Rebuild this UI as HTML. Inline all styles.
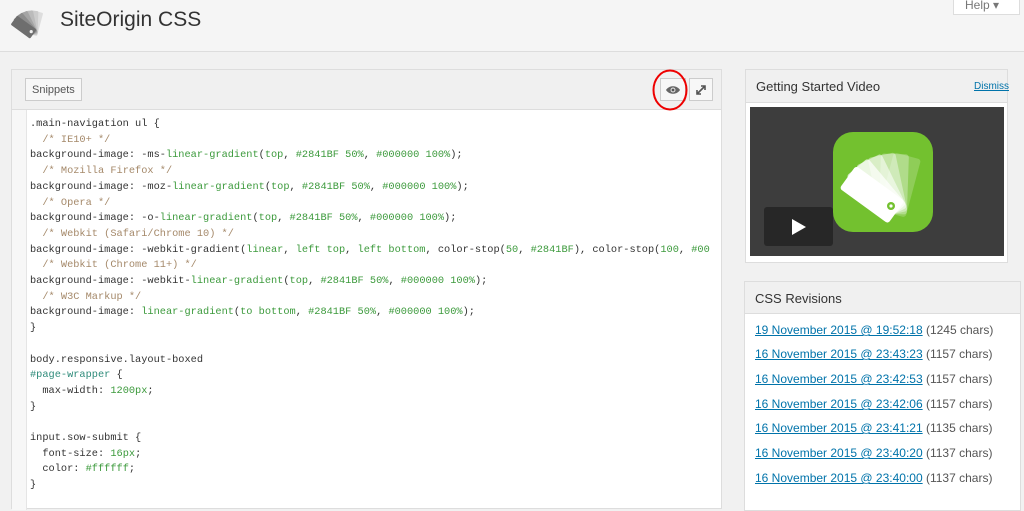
<!DOCTYPE html>
<html><head><style>
*{box-sizing:border-box;margin:0;padding:0}
body{width:1024px;height:499px;overflow:hidden;background:#f1f1f1;font-family:"Liberation Sans",sans-serif;position:relative;color:#444}
.hdr{position:absolute;left:0;top:0;width:1024px;height:52px;background:#f5f5f5;border-bottom:1px solid #ddd}
.help{position:absolute;left:953px;top:-6px;width:67px;height:21px;background:#fff;border:1px solid #ddd;font-size:12px;color:#777;padding:3px 0 0 11px}
.title{position:absolute;left:60px;top:8px;font-size:21px;color:#333}
.panel{position:absolute;background:#fff;border:1px solid #ddd}
.ph{position:absolute;left:0;right:0;top:0;background:#f0f0f0;border-bottom:1px solid #ddd}
.btn{position:absolute;background:#f7f7f7;border:1px solid #ccc}
.code{position:absolute;left:30px;top:117px;font-family:"Liberation Mono","DejaVu Sans Mono",monospace;font-size:10.3px;line-height:15.7px;color:#333;white-space:pre;font-weight:normal}
.c{color:#a5896a}.g{color:#3c9a3c}.t{color:#2e8b7a}
.rev{position:absolute;left:755px;font-size:12px;color:#555;white-space:nowrap}
.rev a{color:#0073aa;text-decoration:underline}
</style></head><body>
<div class="hdr"></div>
<div class="help">Help ▾</div>
<svg style="position:absolute;left:6px;top:2px" width="44" height="40" viewBox="0 0 100 100">
<g transform="translate(60,78)">
<rect x="-14" y="-56" width="28" height="60" rx="3" fill="#ddd" transform="rotate(15)"/>
<rect x="-14" y="-56" width="28" height="60" rx="3" fill="#ccc" transform="rotate(2)"/>
<rect x="-14" y="-56" width="28" height="60" rx="3" fill="#bbb" transform="rotate(-12)"/>
<rect x="-14" y="-56" width="28" height="60" rx="3" fill="#a5a5a5" transform="rotate(-26)"/>
<rect x="-14" y="-56" width="28" height="60" rx="3" fill="#8d8d8d" transform="rotate(-40)"/>
<rect x="-14" y="-56" width="28" height="60" rx="3" fill="#6e6e6e" transform="rotate(-54)"/>
</g><circle cx="58" cy="74" r="4" fill="#eee"/></svg>
<div class="title">SiteOrigin CSS</div>

<div class="panel" style="left:11px;top:69px;width:711px;height:440px">
<div class="ph" style="height:40px"></div>
<div style="position:absolute;left:0;top:40px;width:15px;height:400px;background:#f7f7f7;border-right:1px solid #e5e5e5"></div>
</div>
<div class="btn" style="left:25px;top:78px;width:57px;height:23px;font-size:11px;color:#555;padding:5px 0 0 6px">Snippets</div>
<div class="btn" style="left:660px;top:78px;width:26px;height:23px"></div>
<svg style="position:absolute;left:665px;top:84px" width="16" height="12" viewBox="0 0 16 12"><path d="M1 6C4 1 12 1 15 6C12 11 4 11 1 6Z" fill="#666"/><circle cx="8" cy="6" r="2.5" fill="#ddd"/><circle cx="8" cy="6" r="1.4" fill="#555"/></svg>
<div class="btn" style="left:689px;top:78px;width:24px;height:23px"></div>
<svg style="position:absolute;left:694px;top:83px" width="14" height="14" viewBox="0 0 14 14"><path d="M3 11L11 3M7 3h4v4M3 7v4h4" stroke="#555" stroke-width="1.6" fill="none"/></svg>
<svg style="position:absolute;left:651px;top:69px" width="40" height="44"><ellipse cx="19" cy="21" rx="16.5" ry="19.5" fill="none" stroke="#e00" stroke-width="2"/></svg>

<div class="code">.main-navigation ul {
  <span class="c">/* IE10+ */</span>
background-image: -ms-<span class="g">linear-gradient</span>(<span class="g">top</span>, <span class="g">#2841BF 50%</span>, <span class="g">#000000 100%</span>);
  <span class="c">/* Mozilla Firefox */</span>
background-image: -moz-<span class="g">linear-gradient</span>(<span class="g">top</span>, <span class="g">#2841BF 50%</span>, <span class="g">#000000 100%</span>);
  <span class="c">/* Opera */</span>
background-image: -o-<span class="g">linear-gradient</span>(<span class="g">top</span>, <span class="g">#2841BF 50%</span>, <span class="g">#000000 100%</span>);
  <span class="c">/* Webkit (Safari/Chrome 10) */</span>
background-image: -webkit-gradient(<span class="g">linear</span>, <span class="g">left top</span>, <span class="g">left bottom</span>, color-stop(<span class="g">50</span>, <span class="g">#2841BF</span>), color-stop(<span class="g">100</span>, <span class="g">#00</span>
  <span class="c">/* Webkit (Chrome 11+) */</span>
background-image: -webkit-<span class="g">linear-gradient</span>(<span class="g">top</span>, <span class="g">#2841BF 50%</span>, <span class="g">#000000 100%</span>);
  <span class="c">/* W3C Markup */</span>
background-image: <span class="g">linear-gradient</span>(<span class="g">to bottom</span>, <span class="g">#2841BF 50%</span>, <span class="g">#000000 100%</span>);
}

body.responsive.layout-boxed
<span class="t">#page-wrapper</span> {
  max-width: <span class="g">1200px</span>;
}

input.sow-submit {
  font-size: <span class="g">16px</span>;
  color: <span class="g">#ffffff</span>;
}</div>

<div class="panel" style="left:745px;top:69px;width:263px;height:194px">
<div class="ph" style="height:33px"></div>
<div style="position:absolute;left:10px;top:9px;font-size:13px;color:#333">Getting Started Video</div>
<div style="position:absolute;right:-2px;top:11px;font-size:10px;color:#0073aa;text-decoration:underline">Dismiss</div>
<div style="position:absolute;left:4px;top:37px;width:254px;height:149px;background:#3d3d3d"></div>
</div>
<div style="position:absolute;left:833px;top:132px;width:100px;height:100px;border-radius:20px;background:#73c12f;overflow:hidden">
<svg width="100" height="100" viewBox="0 0 100 100">
<g transform="translate(60,78)">
<rect x="-14" y="-56" width="28" height="60" rx="3" fill="#fff" opacity=".2" transform="rotate(15)"/>
<rect x="-14" y="-56" width="28" height="60" rx="3" fill="#fff" opacity=".3" transform="rotate(2)"/>
<rect x="-14" y="-56" width="28" height="60" rx="3" fill="#fff" opacity=".4" transform="rotate(-12)"/>
<rect x="-14" y="-56" width="28" height="60" rx="3" fill="#fff" opacity=".55" transform="rotate(-26)"/>
<rect x="-14" y="-56" width="28" height="60" rx="3" fill="#fff" opacity=".7" transform="rotate(-40)"/>
<rect x="-14" y="-56" width="28" height="60" rx="3" fill="#fff" transform="rotate(-54)"/>
</g><circle cx="58" cy="74" r="4" fill="#73c12f"/><circle cx="58" cy="74" r="1.6" fill="#fff"/></svg></div>
<div style="position:absolute;left:764px;top:207px;width:69px;height:39px;background:#262626;border-radius:3px;opacity:.95"></div>
<svg style="position:absolute;left:791px;top:218px" width="16" height="18"><path d="M1 1L15 9L1 17Z" fill="#fff"/></svg>

<div class="panel" style="left:744px;top:281px;width:277px;height:230px">
<div class="ph" style="height:32px"></div>
<div style="position:absolute;left:10px;top:9px;font-size:13px;color:#333">CSS Revisions</div>
</div>
<div class="rev" style="top:323px"><a>19 November 2015 @ 19:52:18</a> (1245 chars)</div>
<div class="rev" style="top:347px"><a>16 November 2015 @ 23:43:23</a> (1157 chars)</div>
<div class="rev" style="top:372px"><a>16 November 2015 @ 23:42:53</a> (1157 chars)</div>
<div class="rev" style="top:397px"><a>16 November 2015 @ 23:42:06</a> (1157 chars)</div>
<div class="rev" style="top:421px"><a>16 November 2015 @ 23:41:21</a> (1135 chars)</div>
<div class="rev" style="top:446px"><a>16 November 2015 @ 23:40:20</a> (1137 chars)</div>
<div class="rev" style="top:471px"><a>16 November 2015 @ 23:40:00</a> (1137 chars)</div>
</body></html>
